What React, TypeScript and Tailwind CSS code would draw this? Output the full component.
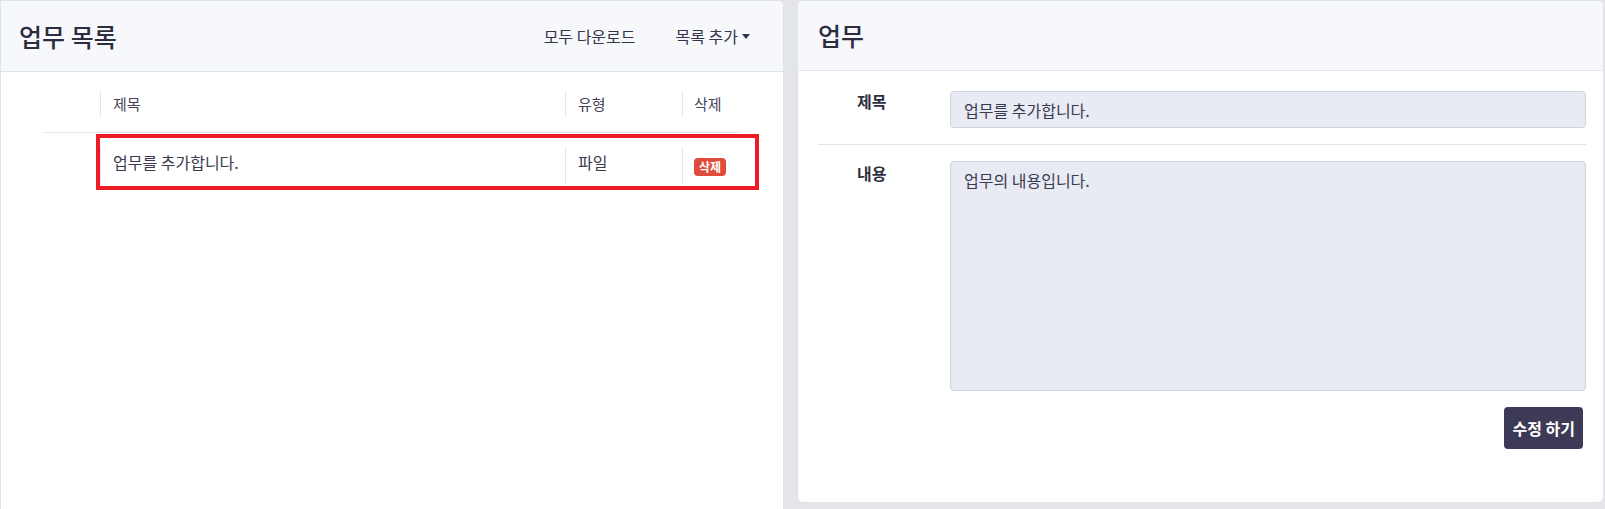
import React from "react";

export default function App() {
  return (
    <div className="relative flex h-[509px] w-[1605px] overflow-hidden bg-[#e4e5eb] font-['Noto_Sans_CJK_KR','Noto_Sans',sans-serif] text-[#3b3b4d]">
      {/* Left card */}
      <div className="h-[520px] w-[784px] shrink-0 overflow-hidden rounded-tr-md border border-[#e0e2ea] bg-white">
        <div className="flex h-[71px] items-center justify-between border-b border-[#e2e4ec] bg-[#f7f8fc] pl-[18px] pr-[33px]">
          <h1 className="text-[25px] font-medium leading-none text-[#2d2d3f]">업무 목록</h1>
          <div className="flex items-center gap-[40px] text-[16px] text-[#34344a]">
            <span>모두 다운로드</span>
            <span className="flex items-center gap-[4px]">
              목록 추가
              <span className="mt-[1px] h-0 w-0 border-x-[4px] border-t-[5px] border-x-transparent border-t-[#34344a]" />
            </span>
          </div>
        </div>
        <div className="ml-[42px] mt-[20px] w-[698px]">
          <div className="flex border-b border-[#e3e5ea] pb-[15px] text-[15px] text-[#44445a]">
            <div className="w-[57px]" />
            <div className="flex h-[25px] w-[465px] items-center border-l border-[#e2e4ea] pl-[12px]">제목</div>
            <div className="flex h-[25px] w-[117px] items-center border-l border-[#e2e4ea] pl-[12px]">유형</div>
            <div className="flex h-[25px] flex-1 items-center border-l border-[#e2e4ea] pl-[11px]">삭제</div>
          </div>
          <div className="flex pt-[14px] text-[16px] text-[#3b3b4d]">
            <div className="w-[57px]" />
            <div className="h-[36px] w-[465px] border-l border-[#e2e4ea] pl-[12px] pt-[3px] leading-[24px]">업무를 추가합니다.</div>
            <div className="h-[36px] w-[117px] border-l border-[#e2e4ea] pl-[12px] pt-[3px] leading-[24px]">파일</div>
            <div className="h-[36px] flex-1 border-l border-[#e2e4ea] pl-[11px] pt-[6px]">
              <span className="inline-flex h-[18px] items-center rounded-[4px] bg-[#e14b3b] px-[5px] text-[12px] font-bold leading-none text-white">삭제</span>
            </div>
          </div>
        </div>
      </div>

      {/* Red annotation box */}
      <div className="pointer-events-none absolute left-[96px] top-[134px] h-[56px] w-[663px] border-[4px] border-[#ed1c24]" />

      {/* Right card */}
      <div className="ml-[13px] h-[503px] w-[807px] shrink-0 overflow-hidden rounded-md border border-[#e0e2ea] bg-white">
        <div className="flex h-[70px] items-center border-b border-[#e2e4ec] bg-[#f7f8fc] pl-[20px]">
          <h1 className="text-[25px] font-medium leading-none text-[#2d2d3f]">업무</h1>
        </div>
        <div className="pl-[20px] pr-[17px]">
          <div className="flex border-b border-[#e2e4ea] pb-[16px] pt-[20px]">
            <div className="-mt-[2px] w-[132px] pl-[39px] text-[16px] font-bold text-[#2f2f42]">제목</div>
            <div className="flex h-[37px] flex-1 items-center rounded-[4px] border border-[#cfd3df] bg-[#e8ebf3] px-[13px] text-[16px] text-[#3b3b4d]">
              업무를 추가합니다.
            </div>
          </div>
          <div className="flex pt-[16px]">
            <div className="w-[132px] pl-[39px] text-[16px] font-bold text-[#2f2f42]">내용</div>
            <div className="h-[230px] flex-1 rounded-[4px] border border-[#cfd3df] bg-[#e8ebf3] px-[13px] pt-[6px] text-[16px] text-[#3b3b4d]">
              업무의 내용입니다.
            </div>
          </div>
          <div className="flex justify-end pr-[3px] pt-[16px]">
            <button className="h-[42px] rounded-[4px] bg-[#3d3a57] px-[8px] text-[16px] font-bold text-white">수정 하기</button>
          </div>
        </div>
      </div>
    </div>
  );
}
